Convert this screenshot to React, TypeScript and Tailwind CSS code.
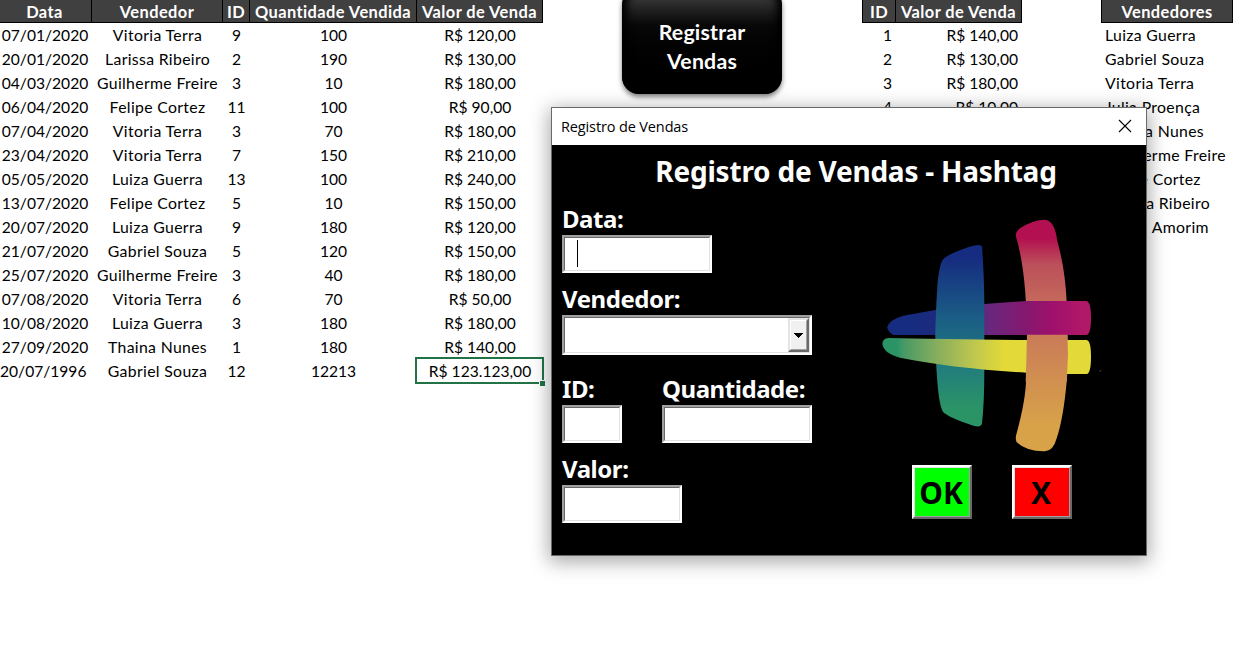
import React from "react";

type Sale = [string, string, string, string, string];

const sales: Sale[] = [
  ["07/01/2020", "Vitoria Terra", "9", "100", "R$ 120,00"],
  ["20/01/2020", "Larissa Ribeiro", "2", "190", "R$ 130,00"],
  ["04/03/2020", "Guilherme Freire", "3", "10", "R$ 180,00"],
  ["06/04/2020", "Felipe Cortez", "11", "100", "R$ 90,00"],
  ["07/04/2020", "Vitoria Terra", "3", "70", "R$ 180,00"],
  ["23/04/2020", "Vitoria Terra", "7", "150", "R$ 210,00"],
  ["05/05/2020", "Luiza Guerra", "13", "100", "R$ 240,00"],
  ["13/07/2020", "Felipe Cortez", "5", "10", "R$ 150,00"],
  ["20/07/2020", "Luiza Guerra", "9", "180", "R$ 120,00"],
  ["21/07/2020", "Gabriel Souza", "5", "120", "R$ 150,00"],
  ["25/07/2020", "Guilherme Freire", "3", "40", "R$ 180,00"],
  ["07/08/2020", "Vitoria Terra", "6", "70", "R$ 50,00"],
  ["10/08/2020", "Luiza Guerra", "3", "180", "R$ 180,00"],
  ["27/09/2020", "Thaina Nunes", "1", "180", "R$ 140,00"],
  ["20/07/1996", "Gabriel Souza", "12", "12213", "R$ 123.123,00"],
];

const prices = [
  ["1", "R$ 140,00"],
  ["2", "R$ 130,00"],
  ["3", "R$ 180,00"],
  ["4", "R$ 10,00"],
];

const sellers = [
  "Luiza Guerra",
  "Gabriel Souza",
  "Vitoria Terra",
  "Julia Proença",
  "Thaina Nunes",
  "Guilherme Freire",
  "Felipe Cortez",
  "Larissa Ribeiro",
  "Bruna Amorim",
];

function Head({ children, first }: { children: React.ReactNode; first?: boolean }) {
  return (
    <div
      className={`flex h-[23px] items-center justify-center border-r border-b border-black bg-[#404040] pt-px text-[16.4px] font-bold tracking-[0.44px] text-white ${
        first ? "border-l" : ""
      }`}
    >
      {children}
    </div>
  );
}

function SalesTable() {
  return (
    <div className="w-[543px]">
      <div className="grid grid-cols-[92px_131px_27px_167px_126px]">
        <Head>
          <span className="pr-[2px]">Data</span>
        </Head>
        <Head>Vendedor</Head>
        <Head>ID</Head>
        <Head>Quantidade Vendida</Head>
        <Head>Valor de Venda</Head>
      </div>
      {sales.map((row, i) => {
        const last = i === sales.length - 1;
        return (
          <div key={i} className="grid h-6 grid-cols-[92px_131px_27px_167px_126px] items-center text-center">
            <span className={last ? "pr-[7px]" : "pr-[2px]"}>{row[0]}</span>
            <span className="text-[15.8px] tracking-[0.33px]">{row[1]}</span>
            <span>{row[2]}</span>
            <span>{row[3]}</span>
            <span className="relative">
              {row[4]}
              {last && (
                <span className="absolute -top-[2px] -left-[2px] h-[27px] w-[129px] border-2 border-[#217346]">
                  <span className="absolute -right-[3px] -bottom-[4px] h-[6px] w-[6px] border-t border-l border-white bg-[#217346]" />
                </span>
              )}
            </span>
          </div>
        );
      })}
    </div>
  );
}

function Label({ children }: { children: React.ReactNode }) {
  return (
    <div className="h-[30px] text-[24px] leading-[28px] font-bold tracking-[-0.45px] whitespace-nowrap text-white">
      {children}
    </div>
  );
}

function Sunken({ size, children }: { size: string; children?: React.ReactNode }) {
  return (
    <div className={`border-2 border-t-[#a0a0a0] border-r-white border-b-white border-l-[#a0a0a0] ${size}`}>
      <div className="flex h-full w-full border border-t-[#696969] border-r-[#e3e3e3] border-b-[#e3e3e3] border-l-[#696969] bg-white">
        {children}
      </div>
    </div>
  );
}

function Raised({ color, children }: { color: string; children: React.ReactNode }) {
  return (
    <button className="h-[54px] w-[60px] border-2 border-t-white border-r-[#696969] border-b-[#696969] border-l-white">
      <span
        className={`flex h-full w-full items-center justify-center border border-t-[#e3e3e3] border-r-[#a0a0a0] border-b-[#a0a0a0] border-l-[#e3e3e3] pt-[2px] pr-[2px] text-[30px] leading-none font-bold text-black ${color}`}
      >
        {children}
      </span>
    </button>
  );
}

function Logo() {
  return (
    <svg width="240" height="260" viewBox="0 0 720 780" className="block">
      <defs>
        <linearGradient id="blue" gradientUnits="userSpaceOnUse" x1="0" y1="120" x2="0" y2="665">
          <stop offset="0.07" stopColor="#152c80" />
          <stop offset="0.4" stopColor="#1b5d85" />
          <stop offset="0.65" stopColor="#207a7e" />
          <stop offset="0.9" stopColor="#2b9466" />
        </linearGradient>
        <linearGradient id="pink" gradientUnits="userSpaceOnUse" x1="0" y1="44" x2="0" y2="740">
          <stop offset="0.08" stopColor="#b21050" />
          <stop offset="0.19" stopColor="#bb4f5a" />
          <stop offset="0.34" stopColor="#c4675b" />
          <stop offset="0.51" stopColor="#ca7c57" />
          <stop offset="0.69" stopColor="#d18f50" />
          <stop offset="0.9" stopColor="#d8a348" />
        </linearGradient>
        <linearGradient id="purple" gradientUnits="userSpaceOnUse" x1="52" y1="0" x2="663" y2="0">
          <stop offset="0.1" stopColor="#152c80" />
          <stop offset="0.24" stopColor="#1c2a7d" />
          <stop offset="0.5" stopColor="#68277d" />
          <stop offset="0.68" stopColor="#85186f" />
          <stop offset="0.82" stopColor="#a0106c" />
          <stop offset="0.95" stopColor="#b01868" />
        </linearGradient>
        <linearGradient id="yellow" gradientUnits="userSpaceOnUse" x1="38" y1="0" x2="663" y2="0">
          <stop offset="0.07" stopColor="#2b9466" />
          <stop offset="0.1" stopColor="#479965" />
          <stop offset="0.26" stopColor="#86ad5d" />
          <stop offset="0.43" stopColor="#bcc64f" />
          <stop offset="0.58" stopColor="#e3d938" />
        </linearGradient>
      </defs>
      <path
        fill="url(#pink)"
        d="M438 95Q436 80 450 70Q488 44 525 44Q544 46 553 70Q559 85 562 108Q586 195 590 290L593 400Q594 490 590 530Q580 640 560 700Q550 738 525 739Q470 740 440 712Q436 705 438 692Q472 570 468 500L471 400Q470 200 438 95Z"
      />
      <path
        fill="url(#purple)"
        d="M470 288H648Q663 288 663 340Q663 390 648 390H70Q52 380 52 367Q55 345 100 332L196 315L343 297Z"
      />
      <path
        fill="url(#blue)"
        d="M215 170Q219 152 298 125Q334 115 336 126Q342 200 343 300V500Q343 590 336 655Q334 669 310 662Q240 640 220 622Q208 605 202 530Q195 440 196 380Q198 300 203 230Q208 185 215 170Z"
      />
      <path
        fill="url(#yellow)"
        d="M55 399Q200 402 470 405H650Q663 407 663 455Q663 505 650 507H593L470 503Q250 490 90 458Q42 446 37 417Q38 401 55 399Z"
      />
      <path fill="url(#pink)" d="M471 389H592L594 450L590 530H467Q469 470 471 389Z" />
      <path d="M688 499L694 496" stroke="#4a4a4a" strokeWidth="3" />
    </svg>
  );
}

function SalesDialog() {
  return (
    <section className="absolute top-[107px] left-[551px] flex h-[449px] w-[596px] flex-col border border-[#696969] bg-black shadow-[0_4px_18px_2px_rgba(0,0,0,0.34)]">
      <header className="flex h-[37px] items-center justify-between bg-white pr-[14px] pl-[9px] font-['Open_Sans',sans-serif] text-[14.5px] tracking-[-0.13px]">
        <span>Registro de Vendas</span>
        <svg width="14" height="14" viewBox="0 0 14 14" fill="none" stroke="#000" strokeWidth="1.1" className="-mt-0.5">
          <path d="M1 1L13 13M13 1L1 13" />
        </svg>
      </header>
      <div className="flex grow flex-col font-['Noto_Sans','DejaVu_Sans',sans-serif]">
        <h1 className="h-[60px] pt-[7px] pl-[14px] text-center text-[28px] leading-[39px] font-bold tracking-[-0.22px] text-white">
          Registro de Vendas - Hashtag
        </h1>
        <div className="flex">
          <div className="w-[318px] pl-[10px]">
            <Label>Data:</Label>
            <Sunken size="h-[38px] w-[150px]">
              <span className="mt-[2px] ml-3 h-[27px] w-px bg-black" />
            </Sunken>
            <div className="pt-3">
              <Label>Vendedor:</Label>
              <Sunken size="h-10 w-[250px]">
                <span className="ml-auto h-full w-[21px] border-2 border-t-[#e3e3e3] border-r-[#696969] border-b-[#696969] border-l-[#e3e3e3]">
                  <span className="flex h-full w-full items-center justify-center border border-t-white border-r-[#a0a0a0] border-b-[#a0a0a0] border-l-white bg-[#f0f0f0]">
                    <svg width="9" height="5" viewBox="0 0 9 5" shapeRendering="crispEdges">
                      <path d="M0 0H9L4.5 5Z" />
                    </svg>
                  </span>
                </span>
              </Sunken>
            </div>
            <div className="flex gap-10 pt-5">
              <div className="w-[60px]">
                <Label>ID:</Label>
                <Sunken size="h-[38px] w-[60px]" />
              </div>
              <div>
                <Label>Quantidade:</Label>
                <Sunken size="h-[38px] w-[150px]" />
              </div>
            </div>
            <div className="pt-3">
              <Label>Valor:</Label>
              <Sunken size="h-[38px] w-[120px]" />
            </div>
          </div>
          <div>
            <Logo />
            <div className="flex gap-10 pl-[42px]">
              <Raised color="bg-[#00ff00]">OK</Raised>
              <Raised color="bg-[#ff0000]">X</Raised>
            </div>
          </div>
        </div>
      </div>
    </section>
  );
}

export default function App() {
  return (
    <main className="relative flex h-[649px] w-[1246px] items-start overflow-hidden bg-white font-[Lato,sans-serif] text-[15.6px] leading-6 whitespace-nowrap text-black">
      <SalesTable />
      <button className="ml-[79px] -mt-3 h-[106px] w-40 rounded-[17px] bg-linear-to-b from-[#4a4a4a] via-[#080808] via-35% to-black pt-3 text-[21.3px] leading-[29px] font-bold tracking-[0.2px] text-white shadow-[0_3px_5px_rgba(0,0,0,0.5),inset_5px_0_8px_#000,inset_-5px_0_8px_#000]">
        Registrar
        <br />
        Vendas
      </button>
      <div className="ml-20 w-40">
        <div className="grid grid-cols-[34px_126px]">
          <Head first>ID</Head>
          <Head>Valor de Venda</Head>
        </div>
        {prices.map(([id, value]) => (
          <div key={id} className="grid h-6 grid-cols-[34px_126px] text-right">
            <span className="pr-1">{id}</span>
            <span className="pr-1">{value}</span>
          </div>
        ))}
      </div>
      <div className="ml-[79px] w-[132px]">
        <Head first>Vendedores</Head>
        {sellers.map((name) => (
          <div key={name} className="h-6 pl-1 text-[15.8px] tracking-[0.33px]">
            {name}
          </div>
        ))}
      </div>
      <SalesDialog />
    </main>
  );
}
